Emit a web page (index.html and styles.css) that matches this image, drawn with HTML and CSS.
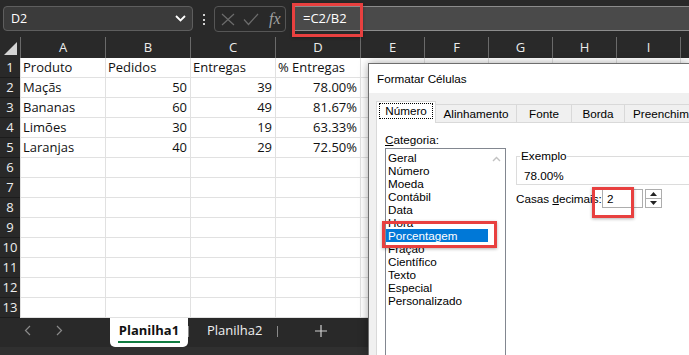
FILE: index.html
```html
<!DOCTYPE html>
<html lang="pt">
<head>
    <meta charset="UTF-8">
    <title>Formatar Células</title>
    <link rel="stylesheet" href="styles.css">
</head>
<body>
    <div class="formula-bar">
        <div class="name-box">
            <span>D2</span>
            <svg width="11" height="7" viewBox="0 0 11 7"><path d="M1 1 L5.5 5.5 L10 1" fill="none" stroke="#fff" stroke-width="1.8"/></svg>
        </div>
        <div class="grip"><i></i><i></i><i></i></div>
        <div class="fx-box">
            <svg width="14" height="13" viewBox="0 0 14 13"><path d="M1 1 L13 12 M13 1 L1 12" stroke="#6c6c6c" stroke-width="1.2"/></svg>
            <svg width="16" height="13" viewBox="0 0 16 13"><path d="M1 6.5 L5.5 11.5 L15 1" fill="none" stroke="#6c6c6c" stroke-width="1.2"/></svg>
            <span class="fx">fx</span>
        </div>
        <div class="formula-input">=C2/B2</div>
    </div>

    <div class="sheet">
        <div class="row head">
            <div class="corner"><svg width="13" height="13" viewBox="0 0 13 13"><polygon points="13,0 13,13 0,13" fill="#d4d4d4"/></svg></div>
            <div class="col">A</div><div class="col">B</div><div class="col">C</div><div class="col">D</div>
            <div class="col">E</div><div class="col">F</div><div class="col">G</div><div class="col">H</div>
            <div class="col">I</div><div class="col"></div>
        </div>
        <div class="row">
            <div class="rh">1</div><div class="cell">Produto</div><div class="cell">Pedidos</div><div class="cell">Entregas</div><div class="cell">% Entregas</div>
            <div class="cell"></div><div class="cell"></div><div class="cell"></div><div class="cell"></div><div class="cell"></div><div class="cell"></div>
        </div>
        <div class="row">
            <div class="rh">2</div><div class="cell">Maçãs</div><div class="cell num">50</div><div class="cell num">39</div><div class="cell num">78.00%</div>
            <div class="cell"></div><div class="cell"></div><div class="cell"></div><div class="cell"></div><div class="cell"></div><div class="cell"></div>
        </div>
        <div class="row">
            <div class="rh">3</div><div class="cell">Bananas</div><div class="cell num">60</div><div class="cell num">49</div><div class="cell num">81.67%</div>
            <div class="cell"></div><div class="cell"></div><div class="cell"></div><div class="cell"></div><div class="cell"></div><div class="cell"></div>
        </div>
        <div class="row">
            <div class="rh">4</div><div class="cell">Limões</div><div class="cell num">30</div><div class="cell num">19</div><div class="cell num">63.33%</div>
            <div class="cell"></div><div class="cell"></div><div class="cell"></div><div class="cell"></div><div class="cell"></div><div class="cell"></div>
        </div>
        <div class="row">
            <div class="rh">5</div><div class="cell">Laranjas</div><div class="cell num">40</div><div class="cell num">29</div><div class="cell num">72.50%</div>
            <div class="cell"></div><div class="cell"></div><div class="cell"></div><div class="cell"></div><div class="cell"></div><div class="cell"></div>
        </div>
        <div class="row"><div class="rh">6</div><div class="cell"></div><div class="cell"></div><div class="cell"></div><div class="cell"></div><div class="cell"></div><div class="cell"></div><div class="cell"></div><div class="cell"></div><div class="cell"></div><div class="cell"></div></div>
        <div class="row"><div class="rh">7</div><div class="cell"></div><div class="cell"></div><div class="cell"></div><div class="cell"></div><div class="cell"></div><div class="cell"></div><div class="cell"></div><div class="cell"></div><div class="cell"></div><div class="cell"></div></div>
        <div class="row"><div class="rh">8</div><div class="cell"></div><div class="cell"></div><div class="cell"></div><div class="cell"></div><div class="cell"></div><div class="cell"></div><div class="cell"></div><div class="cell"></div><div class="cell"></div><div class="cell"></div></div>
        <div class="row"><div class="rh">9</div><div class="cell"></div><div class="cell"></div><div class="cell"></div><div class="cell"></div><div class="cell"></div><div class="cell"></div><div class="cell"></div><div class="cell"></div><div class="cell"></div><div class="cell"></div></div>
        <div class="row"><div class="rh">10</div><div class="cell"></div><div class="cell"></div><div class="cell"></div><div class="cell"></div><div class="cell"></div><div class="cell"></div><div class="cell"></div><div class="cell"></div><div class="cell"></div><div class="cell"></div></div>
        <div class="row"><div class="rh">11</div><div class="cell"></div><div class="cell"></div><div class="cell"></div><div class="cell"></div><div class="cell"></div><div class="cell"></div><div class="cell"></div><div class="cell"></div><div class="cell"></div><div class="cell"></div></div>
        <div class="row"><div class="rh">12</div><div class="cell"></div><div class="cell"></div><div class="cell"></div><div class="cell"></div><div class="cell"></div><div class="cell"></div><div class="cell"></div><div class="cell"></div><div class="cell"></div><div class="cell"></div></div>
        <div class="row"><div class="rh">13</div><div class="cell"></div><div class="cell"></div><div class="cell"></div><div class="cell"></div><div class="cell"></div><div class="cell"></div><div class="cell"></div><div class="cell"></div><div class="cell"></div><div class="cell"></div></div>
    </div>

    <div class="sheet-tabs">
        <div class="nav"><svg width="7" height="11" viewBox="0 0 7 11"><path d="M6 1 L1.5 5.5 L6 10" fill="none" stroke="#8a8a8a" stroke-width="1.2"/></svg></div>
        <div class="nav"><svg width="7" height="11" viewBox="0 0 7 11"><path d="M1 1 L5.5 5.5 L1 10" fill="none" stroke="#8a8a8a" stroke-width="1.2"/></svg></div>
        <div class="tab active"><span>Planilha1</span></div>
        <div class="sep"></div>
        <div class="tab">Planilha2</div>
        <div class="sep"></div>
        <div class="add"><svg width="12" height="12" viewBox="0 0 12 12"><path d="M6 0 V12 M0 6 H12" stroke="#d0d0d0" stroke-width="1.2"/></svg></div>
    </div>
    <div class="status"></div>

    <!-- dialog over the sheet -->
    <div class="dialog">
        <div class="dlg-title">Formatar Células</div>
        <div class="dlg-body">
            <div class="dlg-tabs">
                <div class="dlg-tab selected"><span>Número</span></div>
                <div class="dlg-tab w-alin">Alinhamento</div>
                <div class="dlg-tab w-fonte">Fonte</div>
                <div class="dlg-tab w-borda">Borda</div>
                <div class="dlg-tab w-pre">Preenchim</div>
            </div>
            <div class="dlg-panel">
                <div class="cat-col">
                    <div class="label"><u>C</u>ategoria:</div>
                    <div class="listbox">
                        <div class="items">
                            <div class="item">Geral</div>
                            <div class="item">Número</div>
                            <div class="item">Moeda</div>
                            <div class="item">Contábil</div>
                            <div class="item">Data</div>
                            <div class="item">Hora</div>
                            <div class="item selected">Porcentagem</div>
                            <div class="item">Fração</div>
                            <div class="item">Científico</div>
                            <div class="item">Texto</div>
                            <div class="item">Especial</div>
                            <div class="item">Personalizado</div>
                        </div>
                        <div class="scroll">
                            <svg width="9" height="6" viewBox="0 0 9 6"><path d="M1 5 L4.5 1.5 L8 5" fill="none" stroke="#c2c2c2" stroke-width="1.4"/></svg>
                        </div>
                    </div>
                </div>
                <div class="opt-col">
                    <fieldset class="sample">
                        <legend>Exemplo</legend>
                        <div class="sample-value">78.00%</div>
                    </fieldset>
                    <div class="decimals">
                        <span class="dec-label">Casas <u>d</u>ecimais:</span>
                        <div class="dec-input">2</div>
                        <div class="spin">
                            <div class="spin-half"><svg width="7" height="4" viewBox="0 0 7 4"><polygon points="0,4 3.5,0 7,4" fill="#222"/></svg></div>
                            <div class="spin-half"><svg width="7" height="4" viewBox="0 0 7 4"><polygon points="0,0 3.5,4 7,0" fill="#222"/></svg></div>
                        </div>
                    </div>
                </div>
            </div>
        </div>
    </div>

    <!-- red highlight marks -->
    <div class="mark mark-formula"></div>
    <div class="mark mark-category"></div>
    <div class="mark mark-decimals"></div>
</body>
</html>
```

FILE: styles.css
```css
* {
    box-sizing: border-box;
}
body {
    margin: 0;
    width: 689px;
    height: 355px;
    overflow: hidden;
    position: relative;
    background: #292929;
    font-family: "Open Sans", sans-serif;
}

/* formula bar */
.formula-bar {
    height: 37px;
    display: flex;
    align-items: flex-start;
    padding-top: 6px;
}
.name-box {
    margin-left: 3px;
    width: 190px;
    height: 25px;
    border: 1px solid #5e5e5e;
    border-radius: 4px;
    background: #3b3b3b;
    display: flex;
    align-items: center;
    justify-content: space-between;
    padding: 0 6px 0 7px;
    color: #fff;
    font-size: 12.5px;
}
.grip {
    width: 21px;
    display: flex;
    flex-direction: column;
    align-items: center;
    gap: 2.5px;
    padding-top: 8px;
}
.grip i {
    width: 2px;
    height: 2px;
    background: #d0d0d0;
}
.fx-box {
    width: 72px;
    height: 26px;
    border: 1px solid #565656;
    border-radius: 4px;
    display: flex;
    align-items: center;
    padding-left: 6px;
    gap: 8px;
}
.fx {
    font-family: "Liberation Serif", serif;
    font-style: italic;
    font-size: 16px;
    color: #a0a0a0;
    margin-left: 2px;
}
.formula-input {
    margin-left: 6px;
    flex: 1;
    height: 25px;
    background: #4a4a4a;
    border-top: 1px solid #8c8c8c;
    border-bottom: 1px solid #8c8c8c;
    color: #fff;
    font-size: 13px;
    line-height: 23px;
    padding-left: 11px;
}

/* grid */
.row {
    display: grid;
    grid-template-columns: 20px 85px 85px 85px 85px 64px 64px 64px 64px 64px 64px;
    height: 20px;
}
.head {
    height: 21px;
    color: #ececec;
}
.corner {
    display: flex;
    align-items: flex-end;
    justify-content: flex-end;
    padding: 0 3px 3px 0;
}
.col {
    border-left: 1px solid #6a6a6a;
    text-align: center;
    font-size: 13px;
    line-height: 21px;
}
.rh {
    background: #292929;
    color: #eee;
    font-size: 13px;
    line-height: 19px;
    text-align: center;
    border-bottom: 1px solid #1c1c1c;
}
.cell {
    background: #fff;
    border-left: 1px solid #e1e1e1;
    border-bottom: 1px solid #e1e1e1;
    padding: 0 3px 0 2px;
    font-size: 13px;
    line-height: 19px;
    color: #111;
    white-space: nowrap;
    overflow: hidden;
}
.num {
    text-align: right;
}

/* sheet tabs */
.sheet-tabs {
    height: 29px;
    display: flex;
    align-items: flex-start;
    padding-left: 11px;
    color: #f0f0f0;
    font-size: 13px;
}
.nav {
    width: 32px;
    height: 25px;
    display: flex;
    align-items: center;
    justify-content: center;
}
.tab {
    height: 25px;
    line-height: 25px;
    padding: 0 14px 0 18px;
}
.tab.active {
    margin-left: 35px;
    width: 78px;
    height: 29px;
    padding: 0;
    background: #fff;
    color: #111;
    font-weight: bold;
    text-align: center;
    border-radius: 0 0 5px 5px;
}
.tab.active span {
    display: inline-block;
    line-height: 21px;
    margin-top: 2px;
    border-bottom: 2px solid #107c41;
    padding: 0 1px;
}
.sep {
    width: 1px;
    height: 11px;
    margin: 8px 0 0 5px;
    background: #8a8a8a;
}
.tab + .sep {
    margin-left: 0;
}
.add {
    margin-left: 27px;
    width: 32px;
    height: 25px;
    display: flex;
    align-items: center;
    justify-content: center;
}
.status {
    height: 8px;
    background: #303030;
}

/* dialog */
.dialog {
    position: absolute;
    left: 368px;
    top: 63px;
    width: 321px;
    height: 292px;
    border: 1px solid #6e6e6e;
    border-right: none;
    border-bottom: none;
    background: #f0f0f0;
    box-shadow: 0 0 9px rgba(0, 0, 0, 0.35);
    font-family: "Liberation Sans", Arial, sans-serif;
    font-size: 11.7px;
    color: #000;
    overflow: hidden;
}
.dlg-title {
    height: 29px;
    line-height: 29px;
    background: #fff;
    padding-left: 8px;
}
.dlg-body {
    padding: 8px 0 0 7px;
}
.dlg-tabs {
    display: flex;
    align-items: flex-end;
    height: 22px;
    position: relative;
    z-index: 1;
}
.dlg-tab {
    height: 19px;
    line-height: 17px;
    border: 1px solid #d9d9d9;
    border-bottom: none;
    border-left: none;
    text-align: center;
    white-space: nowrap;
    overflow: hidden;
}
.dlg-tab.selected {
    width: 60px;
    height: 22px;
    background: #fff;
    border-left: 1px solid #d9d9d9;
    padding-top: 2px;
    line-height: 14px;
}
.dlg-tab.selected span {
    display: inline-block;
    outline: 1px dotted #000;
    padding: 0 5px;
}
.w-alin { width: 81px; }
.w-fonte { width: 55px; }
.w-borda { width: 53px; }
.w-pre { flex: 1; text-align: left; padding-left: 8px; border-right: none; }
.dlg-panel {
    margin-top: -1px;
    height: 240px;
    background: #fff;
    border: 1px solid #d9d9d9;
    border-right: none;
    display: flex;
    padding: 10px 0 0 8px;
}
.cat-col {
    width: 121px;
}
.label {
    height: 14px;
    line-height: 14px;
}
.listbox {
    margin-top: 1px;
    height: 220px;
    border: 1px solid #828790;
    display: flex;
    padding-top: 2px;
}
.items {
    width: 102px;
}
.item {
    height: 13px;
    line-height: 13px;
    padding-left: 2px;
    white-space: nowrap;
}
.item.selected {
    background: #0078d7;
    color: #fff;
}
.scroll {
    flex: 1;
    display: flex;
    justify-content: center;
    padding-top: 5px;
}
.opt-col {
    margin-left: 10px;
    padding-top: 16px;
    flex: 1;
}
.sample {
    margin: 0;
    padding: 6px 0 2px 7px;
    border: 1px solid #dcdcdc;
    border-right: none;
}
.sample legend {
    margin-left: -4px;
    padding: 0 1px;
    line-height: 14px;
}
.sample-value {
    line-height: 13px;
}
.decimals {
    margin-top: 4px;
    height: 19px;
    display: flex;
    align-items: center;
}
.dec-label {
    width: 86px;
    white-space: nowrap;
}
.dec-input {
    width: 41px;
    height: 19px;
    border: 1px solid #adadad;
    line-height: 17px;
    padding-left: 4px;
}
.spin {
    margin-left: 2px;
    width: 17px;
    height: 19px;
    border: 1px solid #adadad;
    display: flex;
    flex-direction: column;
}
.spin-half {
    flex: 1;
    display: flex;
    align-items: center;
    justify-content: center;
}
.spin-half + .spin-half {
    border-top: 1px solid #adadad;
}

/* red marks */
.mark {
    position: absolute;
    border: 3px solid #e8403f;
    box-shadow: 0 1px 3px rgba(0, 0, 0, 0.3);
}
.mark-formula {
    left: 292px;
    top: 3px;
    width: 71px;
    height: 34px;
}
.mark-category {
    left: 382px;
    top: 221px;
    width: 115px;
    height: 27px;
}
.mark-decimals {
    left: 592px;
    top: 187px;
    width: 42px;
    height: 31px;
}
```
